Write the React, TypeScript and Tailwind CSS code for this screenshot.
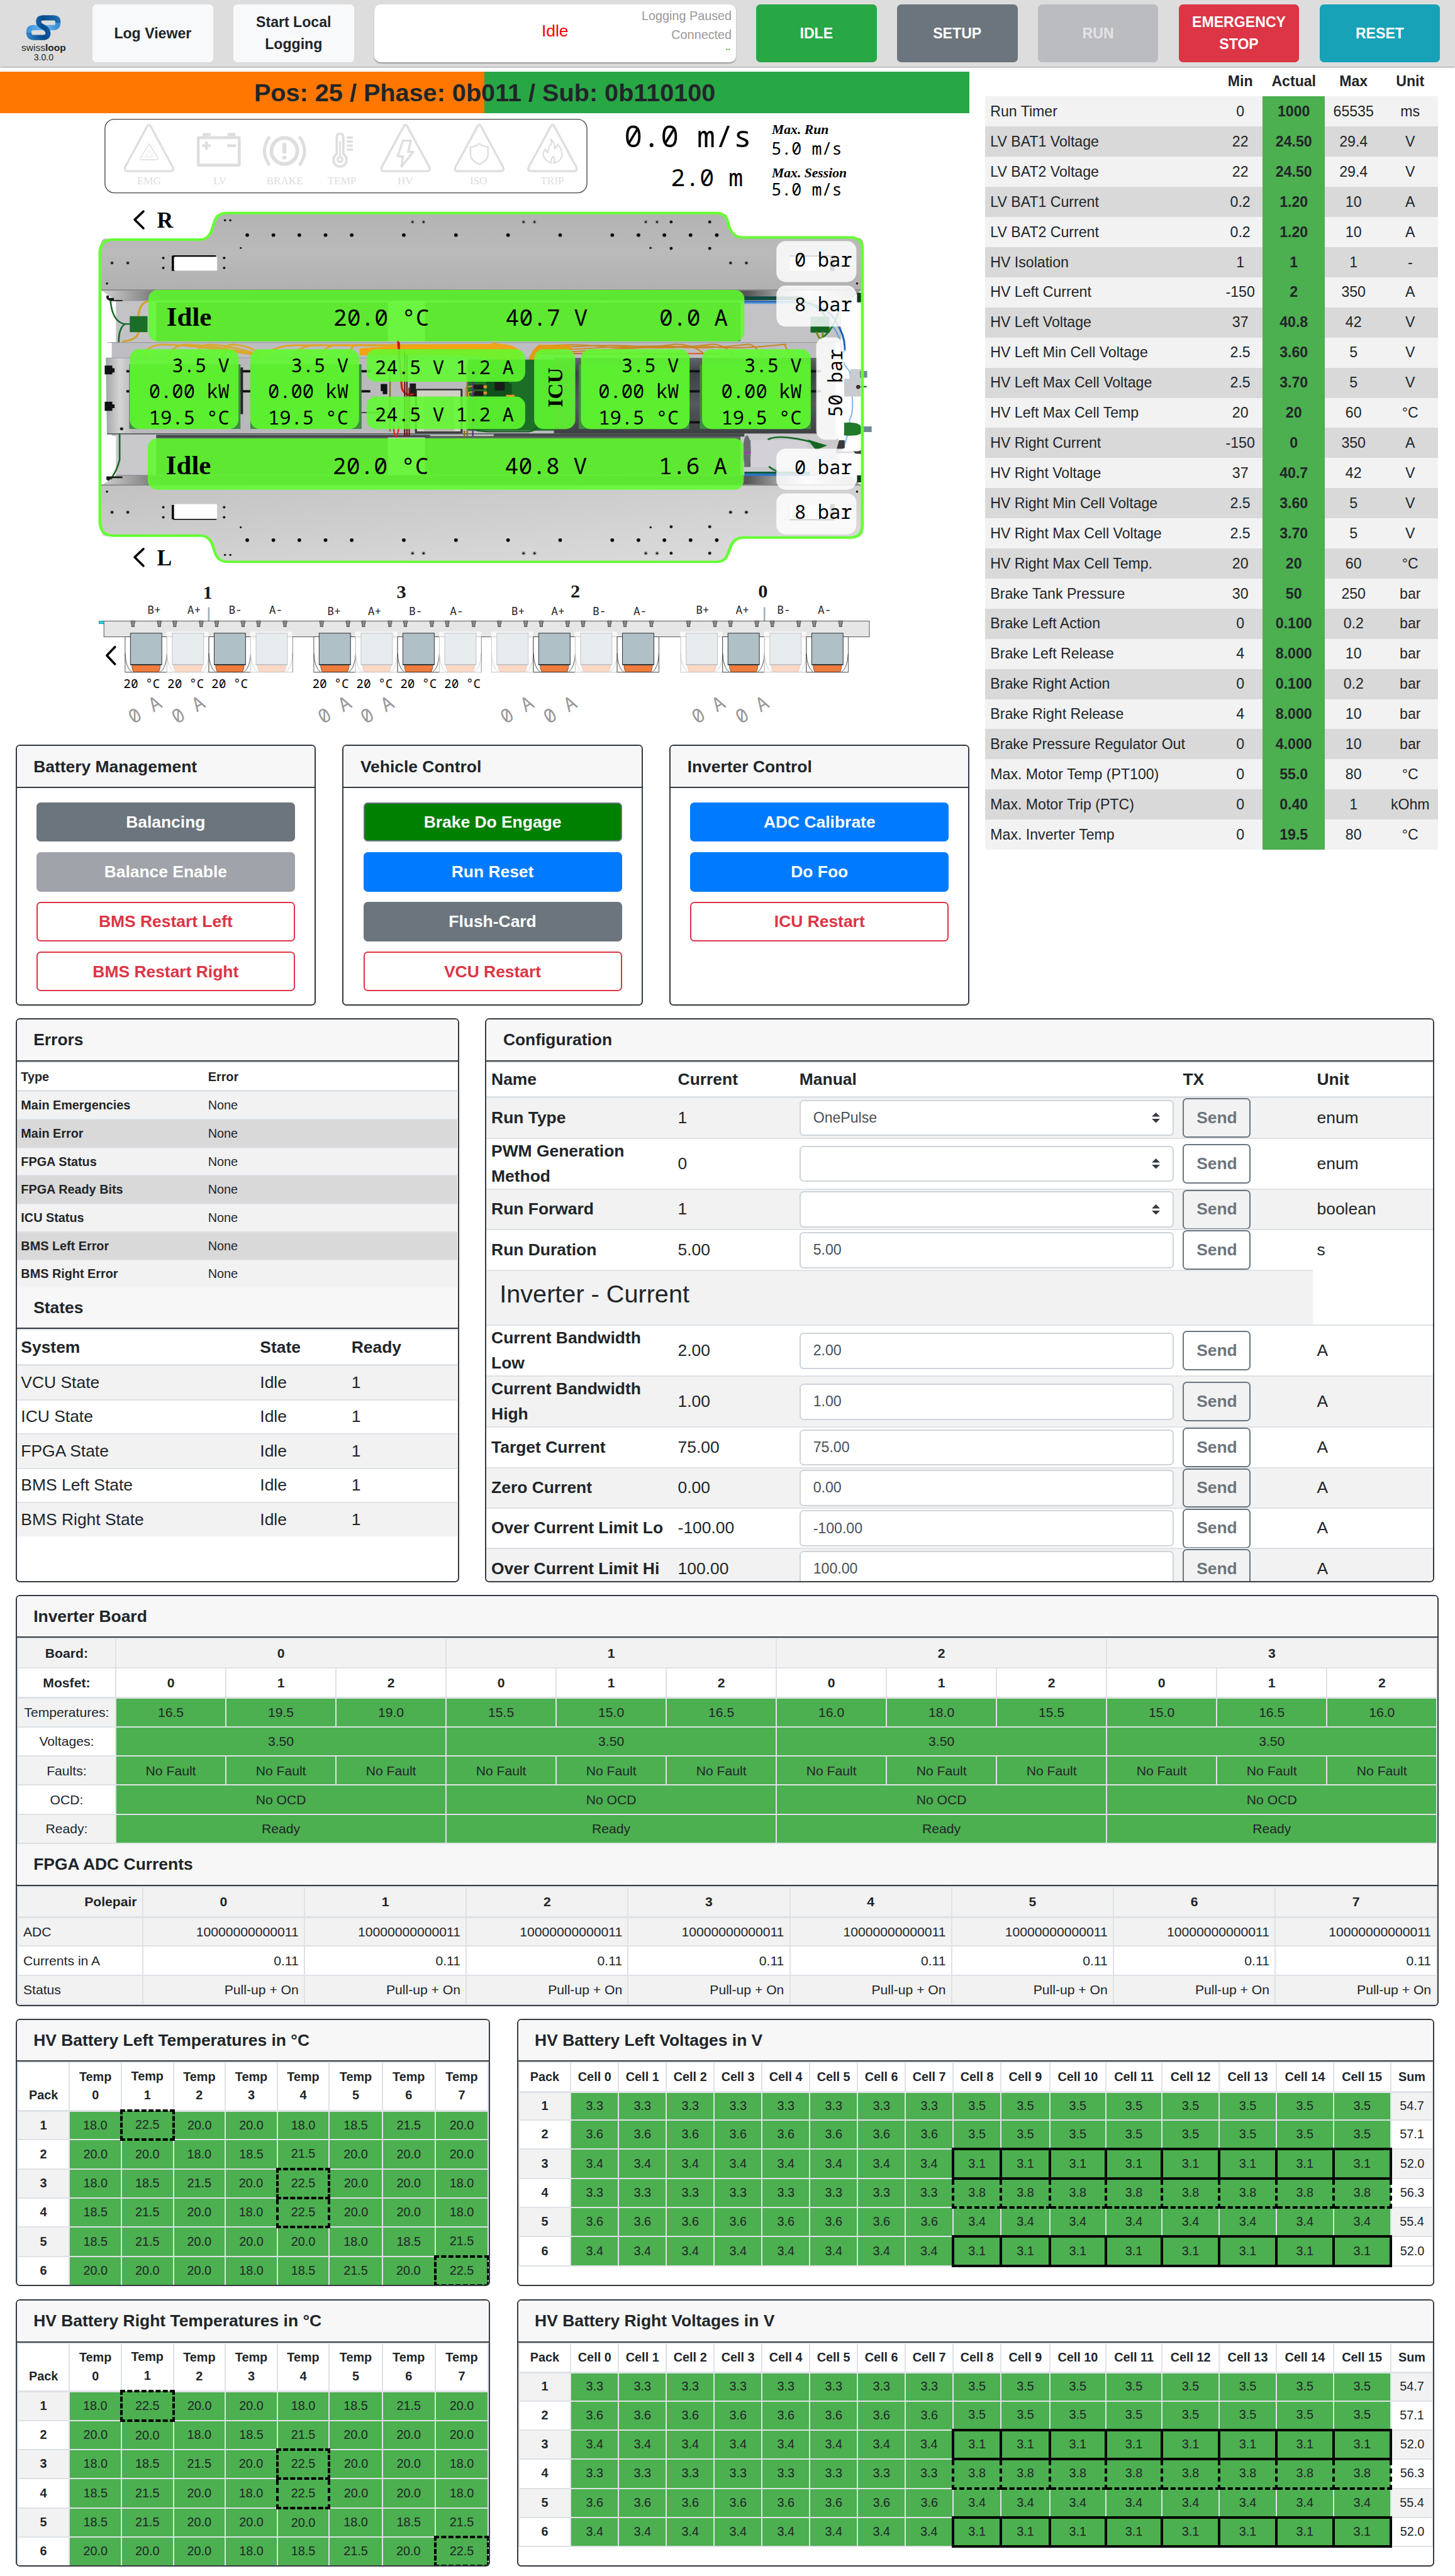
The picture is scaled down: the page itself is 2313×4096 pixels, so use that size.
import type { ReactNode } from "react";

/* ---------- data ---------- */

const sensors: [string, string, string, string, string][] = [
  ["Run Timer", "0", "1000", "65535", "ms"],
  ["LV BAT1 Voltage", "22", "24.50", "29.4", "V"],
  ["LV BAT2 Voltage", "22", "24.50", "29.4", "V"],
  ["LV BAT1 Current", "0.2", "1.20", "10", "A"],
  ["LV BAT2 Current", "0.2", "1.20", "10", "A"],
  ["HV Isolation", "1", "1", "1", "-"],
  ["HV Left Current", "-150", "2", "350", "A"],
  ["HV Left Voltage", "37", "40.8", "42", "V"],
  ["HV Left Min Cell Voltage", "2.5", "3.60", "5", "V"],
  ["HV Left Max Cell Voltage", "2.5", "3.70", "5", "V"],
  ["HV Left Max Cell Temp", "20", "20", "60", "°C"],
  ["HV Right Current", "-150", "0", "350", "A"],
  ["HV Right Voltage", "37", "40.7", "42", "V"],
  ["HV Right Min Cell Voltage", "2.5", "3.60", "5", "V"],
  ["HV Right Max Cell Voltage", "2.5", "3.70", "5", "V"],
  ["HV Right Max Cell Temp.", "20", "20", "60", "°C"],
  ["Brake Tank Pressure", "30", "50", "250", "bar"],
  ["Brake Left Action", "0", "0.100", "0.2", "bar"],
  ["Brake Left Release", "4", "8.000", "10", "bar"],
  ["Brake Right Action", "0", "0.100", "0.2", "bar"],
  ["Brake Right Release", "4", "8.000", "10", "bar"],
  ["Brake Pressure Regulator Out", "0", "4.000", "10", "bar"],
  ["Max. Motor Temp (PT100)", "0", "55.0", "80", "°C"],
  ["Max. Motor Trip (PTC)", "0", "0.40", "1", "kOhm"],
  ["Max. Inverter Temp", "0", "19.5", "80", "°C"],
];

const errors = [
  "Main Emergencies",
  "Main Error",
  "FPGA Status",
  "FPGA Ready Bits",
  "ICU Status",
  "BMS Left Error",
  "BMS Right Error",
];

const states = ["VCU State", "ICU State", "FPGA State", "BMS Left State", "BMS Right State"];

type ConfigRow = { name: string; current: string; manual?: string; select?: boolean; unit: string; tall?: boolean };

const runConfig: ConfigRow[] = [
  { name: "Run Type", current: "1", manual: "OnePulse", select: true, unit: "enum" },
  { name: "PWM Generation Method", current: "0", select: true, unit: "enum", tall: true },
  { name: "Run Forward", current: "1", select: true, unit: "boolean" },
  { name: "Run Duration", current: "5.00", manual: "5.00", unit: "s" },
];

const inverterConfig: ConfigRow[] = [
  { name: "Current Bandwidth Low", current: "2.00", manual: "2.00", unit: "A", tall: true },
  { name: "Current Bandwidth High", current: "1.00", manual: "1.00", unit: "A", tall: true },
  { name: "Target Current", current: "75.00", manual: "75.00", unit: "A" },
  { name: "Zero Current", current: "0.00", manual: "0.00", unit: "A" },
  { name: "Over Current Limit Lo", current: "-100.00", manual: "-100.00", unit: "A" },
  { name: "Over Current Limit Hi", current: "100.00", manual: "100.00", unit: "A" },
];

const mosfetTemps = ["16.5", "19.5", "19.0", "15.5", "15.0", "16.5", "16.0", "18.0", "15.5", "15.0", "16.5", "16.0"];

const packTemps = [
  ["18.0", "22.5", "20.0", "20.0", "18.0", "18.5", "21.5", "20.0"],
  ["20.0", "20.0", "18.0", "18.5", "21.5", "20.0", "20.0", "20.0"],
  ["18.0", "18.5", "21.5", "20.0", "22.5", "20.0", "20.0", "18.0"],
  ["18.5", "21.5", "20.0", "18.0", "22.5", "20.0", "20.0", "18.0"],
  ["18.5", "21.5", "20.0", "20.0", "20.0", "18.0", "18.5", "21.5"],
  ["20.0", "20.0", "20.0", "18.0", "18.5", "21.5", "20.0", "22.5"],
];

const packVolts: { low: string; high: string; sum: string }[] = [
  { low: "3.3", high: "3.5", sum: "54.7" },
  { low: "3.6", high: "3.5", sum: "57.1" },
  { low: "3.4", high: "3.1", sum: "52.0" },
  { low: "3.3", high: "3.8", sum: "56.3" },
  { low: "3.6", high: "3.4", sum: "55.4" },
  { low: "3.4", high: "3.1", sum: "52.0" },
];

const range = (n: number) => Array.from({ length: n }, (_, i) => i);

/* ---------- shared pieces ---------- */

function Card({ title, className, children }: { title: string; className: string; children: ReactNode }) {
  return (
    <section className={`overflow-hidden rounded-[4px] border-[1.22px] border-[#343a40] bg-white ${className}`}>
      <CardTitle>{title}</CardTitle>
      {children}
    </section>
  );
}

function CardTitle({ children }: { children: ReactNode }) {
  return (
    <h2 className="flex h-[40.4px] items-center border-b-[1.22px] border-[#343a40] bg-[#f7f7f7] px-4 pt-[0.8px] text-base font-bold">
      {children}
    </h2>
  );
}

function Logo() {
  return (
    <div className="flex w-[84px] flex-col items-center pt-3.5 leading-none">
      <svg viewBox="24 13.5 35 25.5" className="h-[25.5px] w-[35px]" fill="none" strokeWidth="5">
        <defs>
          <linearGradient id="logoDark" x1="0" x2="1">
            <stop offset="0" stopColor="#2f7fc4" />
            <stop offset="0.5" stopColor="#034a8c" />
            <stop offset="1" stopColor="#1f6cb0" />
          </linearGradient>
          <linearGradient id="logoLight" x1="0" x2="1">
            <stop offset="0" stopColor="#3f97dc" />
            <stop offset="0.5" stopColor="#6fbcf0" />
            <stop offset="1" stopColor="#3a8fd4" />
          </linearGradient>
        </defs>
        <path d="M55.5 20 V22 Q55.5 26.2 51 26.2 H32 Q27.6 26.4 27.6 30 V32" stroke="url(#logoLight)" />
        <path
          d="M55.5 21.5 V20.5 Q55.5 16.8 51 16.8 H41.5 Q36.9 16.8 36.9 20.5 Q37 23 40 24.8 Q46 27.5 46 31.5 Q46 35.6 41.8 35.6 H32 Q27.6 35.6 27.6 31"
          stroke="url(#logoDark)"
        />
      </svg>
      <div className="mt-[1.5px] text-[9.4px] leading-[10px]">
        swiss<b>loop</b>
      </div>
      <div className="text-[8.5px] leading-[9px]">3.0.0</div>
    </div>
  );
}

function TopButton({ children, className }: { children: ReactNode; className: string }) {
  return (
    <button
      className={`flex h-14 w-[116px] shrink-0 items-center justify-center rounded-[4px] px-2 text-center text-sm leading-[21px] font-bold ${className}`}
    >
      {children}
    </button>
  );
}

function Header() {
  return (
    <header className="relative flex h-16 bg-[#ddd] shadow-[0_1px_1px_rgba(0,0,0,0.3)]">
      <Logo />
      <div className="ml-[5px] flex gap-[19.55px] pt-1">
        <TopButton className="bg-[#f8f9fa] text-[#212529]">Log Viewer</TopButton>
        <TopButton className="bg-[#f8f9fa] text-[#212529]">Start Local Logging</TopButton>
        <div className="relative h-14 w-[348px] shrink-0 rounded-[6px] bg-white shadow-[0_1px_1px_rgba(0,0,0,0.3)]">
          <div className="pt-[14.3px] text-center text-base leading-6 text-[red]">Idle</div>
          <div className="absolute top-[2.6px] right-1 text-right text-xs leading-[18px] text-[#999]">
            <div>Logging Paused</div>
            <div>Connected</div>
            <div className="text-[7px] leading-[8px] text-[green]">↔</div>
          </div>
        </div>
        <TopButton className="bg-[#28a745] text-white">IDLE</TopButton>
        <TopButton className="bg-[#6c757d] text-white">SETUP</TopButton>
        <TopButton className="bg-[#bbbcc0] text-[#e3e3e5]">RUN</TopButton>
        <TopButton className="bg-[#dc3545] text-white">EMERGENCY STOP</TopButton>
        <TopButton className="bg-[#17a2b8] text-white">RESET</TopButton>
      </div>
    </header>
  );
}

/* ---------- vehicle drawing ---------- */

const MONO = "font-['Noto_Sans_Mono','DejaVu_Sans_Mono',monospace]";
const SERIF = "font-['Liberation_Serif',serif]";

function WarnTriangle({ cx }: { cx: number }) {
  return (
    <path
      d={`M${cx - 1.6} 121.5 Q${cx} 118.9 ${cx + 1.6} 121.5 L${cx + 23} 161 Q${cx + 24.2} 164.6 ${cx + 21} 164.8 H${cx - 21} Q${cx - 24.2} 164.6 ${cx - 23} 161 Z`}
      strokeWidth="2"
    />
  );
}

function Indicators() {
  const labels: [number, string][] = [
    [143.3, "EMG"],
    [211.6, "LV"],
    [274, "BRAKE"],
    [329, "TEMP"],
    [390, "HV"],
    [460.5, "ISO"],
    [531.4, "TRIP"],
  ];
  return (
    <g>
      <rect x="101" y="114.8" width="463.8" height="70.8" rx="9" fill="#fff" stroke="#444" strokeWidth="0.8" />
      <g fill="none" stroke="#dedede" strokeLinejoin="round">
        {[143.3, 390.2, 461.2, 531.7].map((cx) => (
          <WarnTriangle key={cx} cx={cx} />
        ))}
        <path d="M143.5 138.3 L151.8 152 Q152 153.8 150.5 153.8 H136.5 Q134.8 153.8 135.3 152 Z" strokeWidth="0.9" />
        <path d="M143.5 144.5 L147 151 H140 Z" strokeWidth="0.5" />
        <path d="M190.8 132.5 H230.2 V159 H190.8 Z" strokeWidth="2.8" />
        <path d="M195 129.7 H202.5 M219 129.7 H226.6" strokeWidth="3.2" />
        <path d="M194.6 140.2 H202.8 M198.7 136.2 V144.3 M218.6 140.2 H227" strokeWidth="2.6" />
        <circle cx="273.7" cy="145.3" r="12.5" strokeWidth="3.6" />
        <path d="M273.7 137.8 V147.8 M273.7 150.2 V153.4" strokeWidth="3.8" />
        <path d="M259.5 131.5 Q249.5 145.3 259.5 159.2 M288 131.5 Q298 145.3 288 159.2" strokeWidth="3" />
        <path
          d="M324 132 Q324 128.7 327.2 128.7 Q330.4 128.7 330.4 132 V148.4 A6.4 6.4 0 1 1 324 148.4 Z"
          strokeWidth="2.2"
        />
        <circle cx="327.2" cy="153.6" r="2.4" strokeWidth="2" />
        <path d="M327.2 136 V151" strokeWidth="1.6" />
        <path d="M334.6 132.4 H338.6 M334.6 136.3 H338.6 M334.6 140.2 H338.6 M334.6 144.1 H338.6" strokeWidth="2.2" strokeLinecap="round" />
        <path d="M387.8 135.4 H395.4 L392.8 146.2 H397.8 L386.3 160.4 L387.8 150.6 H382.6 Z" strokeWidth="2" />
        <path d="M461.2 138.3 Q464.5 141 469.6 141.5 V149 Q469.5 154.5 461.2 158.2 Q452.9 154.5 452.8 149 V141.5 Q457.9 141 461.2 138.3 Z" strokeWidth="1.5" />
        <path
          d="M530 134 Q534.5 138 533.5 143 Q536 142 536.5 138.8 Q541 143.5 540.8 149 Q540.3 155.5 532.5 157 Q534.8 154 532.6 150.4 Q529.8 153 530.6 156.8 Q523 154.5 522.8 148.2 Q522.8 145.5 525 143.6 Q525.5 146.5 527.4 147 Q527 142 530.6 138.5 Q531 136.5 530 134 Z"
          strokeWidth="1.3"
        />
      </g>
      <g className={SERIF} fill="#dedede" fontSize="10.4" textAnchor="middle">
        {labels.map(([x, t]) => (
          <text key={t} x={x} y="177.7">
            {t}
          </text>
        ))}
      </g>
    </g>
  );
}

const OUTLINE =
  "M78 230 Q80 177 125 177 H435 Q465 177 477 130 L487 95 Q497 66 530 66 H2266 Q2297 66 2306 98 Q2318 168 2358 168 H2742 Q2785 168 2785 222 V1375 Q2783 1426 2742 1426 H2358 Q2328 1430 2318 1462 L2306 1498 Q2297 1528 2266 1528 H530 Q497 1526 487 1490 L477 1455 Q465 1418 435 1418 H125 Q80 1418 78 1360 Z";

function Wires({ d, color, width }: { d: string; color: string; width: number }) {
  return <path d={d} fill="none" stroke={color} strokeWidth={width} strokeLinecap="round" />;
}

/* Top view of the pod, drawn in a 2880 x 1595 space. */
function PodChassis() {
  const bigHoles = [601, 694, 786, 879, 972, 1157, 1342, 1527, 1712, 1897, 1990, 2082, 2175, 2268];
  const smallHoles: [number, number, number][] = [
    [522, 96, 4], [541, 96, 4], [1188, 103, 3.5], [1227, 103, 3.5], [1582, 103, 3.5], [1621, 103, 3.5],
    [2016, 103, 3.5], [2056, 103, 3.5], [2106, 103, 5.5], [2243, 103, 5.5], [2033, 212, 4], [2106, 214, 5.5],
    [2243, 214, 5.5], [2317, 275, 4.5], [2373, 275, 4.5], [578, 212, 3.5], [303, 254, 4.5], [303, 296, 4.5],
    [519, 254, 4.5], [519, 296, 4.5], [121, 275, 4.5], [177, 275, 4.5], [103, 361, 4], [2766, 361, 4],
  ];
  const ringed = new Set([1188, 1227, 1582, 1621, 2016, 2056, 2317, 2373, 121, 177]);
  const heads = [0, 1, 2, 3];
  return (
    <g transform="translate(75 190) scale(0.27105 0.2296)">
      <defs>
        <linearGradient id="plateTop" x1="0" y1="0" x2="0" y2="1">
          <stop offset="0" stopColor="#b3b3b3" />
          <stop offset="0.5" stopColor="#bababa" />
          <stop offset="1" stopColor="#b1b1b1" />
        </linearGradient>
        <linearGradient id="plateBottom" x1="0" y1="0" x2="1" y2="1">
          <stop offset="0" stopColor="#c2c2c2" />
          <stop offset="1" stopColor="#dedede" />
        </linearGradient>
        <linearGradient id="lip" x1="0" x2="1">
          <stop offset="0" stopColor="#d2d2d2" />
          <stop offset="0.08" stopColor="#6d6d6d" />
          <stop offset="0.85" stopColor="#555" />
          <stop offset="0.93" stopColor="#e6e6e6" />
          <stop offset="1" stopColor="#999" />
        </linearGradient>
        <linearGradient id="box" x1="0" x2="1">
          <stop offset="0" stopColor="#a6a6a6" />
          <stop offset="0.03" stopColor="#d4d4d4" />
          <stop offset="0.06" stopColor="#b8b8ba" />
          <stop offset="1" stopColor="#bcbbbe" />
        </linearGradient>
        <linearGradient id="darkBox" x1="0" y1="0" x2="0" y2="1">
          <stop offset="0" stopColor="#60666a" />
          <stop offset="0.2" stopColor="#3e4143" />
          <stop offset="0.6" stopColor="#56595b" />
          <stop offset="1" stopColor="#3d4144" />
        </linearGradient>
      </defs>

      {/* plates */}
      <path d="M83 390 V190 Q84 174 100 173 H435 Q465 177 477 130 L487 95 Q497 70 530 68 H2290 Q2308 70 2308 98 Q2318 168 2358 170 H2772 Q2789 174 2789 195 V390 Z" fill="url(#plateTop)" />
      <path d="M83 1205 V1400 Q86 1420 100 1421 H435 Q465 1418 477 1455 L487 1490 Q497 1526 530 1526 H2285 Q2308 1524 2310 1495 Q2318 1428 2358 1424 H2772 Q2789 1420 2789 1400 V1205 Z" fill="url(#plateBottom)" />

      {/* inner tray */}
      <path d="M135 433 H2710 V607 H135 Z" fill="#c3c2c5" />
      <path d="M120 607 H2690 V1000 H120 Z" fill="#bebdc1" />
      <path d="M135 993 H2700 V1165 H135 Z" fill="#c9c8cb" />
      <path d="M83 390 H2780 L2740 433 H135 Z" fill="url(#lip)" />
      <path d="M135 1165 H2740 L2780 1208 H83 Z" fill="url(#lip)" />
      <path d="M83 388 H2780 M83 1206 H2780" stroke="#8b8b8b" strokeWidth="5" />
      <path d="M278 440 H1100 V603 H278 Z M1232 440 H2352 V603 H1232 Z M278 1000 H1100 V1165 H278 Z M1232 1000 H2352 V1165 H1232 Z" fill="#3c4a3a" opacity="0.75" />
      <path d="M105 609 H2700 M135 433 H2700 M135 1165 H2700" stroke="#8f979d" strokeWidth="3" fill="none" />

      {/* battery box */}
      <path d="M100 673 H1690 V993 H104 Z" fill="url(#box)" stroke="#8a9aa3" strokeWidth="2" />
      <path d="M1690 673 H2625 V990 H1690 Z" fill="url(#darkBox)" />
      <path d="M104 991 H1600" stroke="#55595c" strokeWidth="4" />
      <path d="M278 996 H1250 V1006 H278 Z M1476 990 H2366 V1003 H1476 Z" fill="#44484c" />

      {/* module connectors */}
      {[[172, 729], [172, 813], [577, 729], [577, 813], [1000, 729], [1000, 813], [2170, 729], [2170, 813], [2170, 943], [2600, 729], [2600, 813]].map(
        ([x, y]) => (
          <path key={`${x}-${y}`} d={`M${x} ${y - 5} h38 v10 h-38 Z`} fill="#111" />
        ),
      )}
      <path d="M577 713 h9 v196 h-9 Z M1004 900 H1110 V904 H1004 Z" fill="#222" />
      <path d="M95 705 H122 V716 H130 V734 H122 V742 H95 Z M95 857 H122 V868 H130 V884 H122 V895 H95 Z M1075 782 H1098 V825 H1082 V812 H1075 Z" fill="#101315" />
      <circle cx="155" cy="970" r="6" fill="#111" />
      <path d="M182 700 H577 V971 H182 Z M612 700 H1007 V971 H612 Z M1778 700 H2170 V971 H1778 Z M2208 700 H2602 V971 H2208 Z" fill="#3f8a45" />

      {/* high voltage harness */}
      {heads.map((i) => (
        <g key={i}>
          <Wires d={`M${235 + i * 92} 670 Q${240 + i * 92} 616 ${310 + i * 80} 617 Q${440 + i * 60} 622 650 665`} color="#d9a92c" width={7} />
          <Wires d={`M${670 + i * 96} 665 Q${690 + i * 96} 617 ${800 + i * 60} 620 H1500`} color="#e3a420" width={7} />
          <Wires d={`M1640 ${626 + i * 10} Q${1750 + i * 120} ${610 + i * 3} ${1860 + i * 130} 625 Q${1960 + i * 120} 640 ${2120 + i * 130} 616 Q${2190 + i * 105} 614 ${2230 + i * 100} 665`} color="#c98722" width={5} />
        </g>
      ))}
      <path d="M1000 633 Q1200 612 1500 615 Q1560 617 1580 660 L1530 700 Q1500 660 1200 662 H1000 Z" fill="#f2a413" />
      <Wires d="M1476 620 Q1580 640 1586 860" color="#eda31a" width={22} />
      <Wires d="M1600 905 Q1585 680 1640 630 H1740" color="#e39a17" width={24} />
      <Wires d="M1600 790 Q1610 700 1650 640" color="#f2b02c" width={6} />
      <path d="M1640 655 H2280" stroke="#df5a22" strokeWidth="5" />

      {/* electronics bay */}
      <path d="M1385 680 H1690 V978 H1385 Z" fill="#1c6e27" />
      <path d="M1450 760 H1530 V835 H1450 Z M1500 780 H1540 V830 H1500 Z" fill="#0e4f1a" />
      <path d="M1200 806 H1362 V985 H1200 Z" fill="#d2d0c6" stroke="#333" strokeWidth="7" />
      <path d="M1228 835 H1335 V980 H1228 Z" fill="#b9b7ab" />
      <path d="M1178 780 H1200 V835 H1178 Z M1405 785 H1440 V805 H1405 Z M1405 812 H1440 V832 H1405 Z M1480 775 H1515 V810 H1480 Z" fill="#1a1a1a" />
      <path d="M1440 788 h12 v12 h-12 Z M1440 814 h12 v12 h-12 Z M1520 828 h30 v8 h-30 Z" fill="#f28c28" />
      <Wires d="M1376 835 V800 Q1380 792 1400 792 M1390 835 Q1376 815 1405 815" color="#c9a02a" width={5} />
      <Wires d="M1136 600 L1150 800 Q1160 835 1190 825 M1140 610 V640" color="#d4190e" width={7} />
      <Wires d="M1160 650 V1000 M1168 660 V998 M1176 800 V998" color="#6b1515" width={5} />
      <Wires d="M1120 960 Q1128 1050 1140 960" color="#ef1414" width={5} />
      <Wires d="M1108 690 V980 M1382 700 V1000 M1372 980 V1000" color="#8a6a20" width={5} />
      <Wires d="M1402 740 V1000" color="#5c2a7a" width={5} />
      <Wires d="M1400 970 Q1420 985 1500 982 H1600 Q1630 980 1640 940" color="#175f22" width={6} />

      {/* left wiring */}
      <Wires d="M115 425 Q120 520 165 531 H185 M165 533 Q145 550 145 605" color="#176a26" width={6} />
      <Wires d="M148 993 V1100 Q140 1140 118 1180" color="#176a26" width={6} />
      <Wires d="M215 495 Q218 445 248 436 M215 565 Q210 598 160 604" color="#d2a42c" width={8} />
      <path d="M184 498 H247 V565 H184 Z" fill="#1a6e29" />
      <path d="M101 412 H110 V422 H128 V430 H158 V435 H120 Q101 432 101 420 Z M101 1183 V1170 H158 V1177 H120 L108 1188 Z" fill="#161616" />

      {/* right wiring and valves */}
      <path d="M2366 415 H2560 V430 H2366 Z" fill="#0e4a44" />
      <Wires d="M2366 438 H2560 Q2660 450 2690 520 Q2725 580 2722 640" color="#1c62b8" width={7} />
      <Wires d="M2366 445 H2560 Q2650 460 2680 540 Q2710 590 2712 640" color="#4c9be6" width={4} />
      <Wires d="M2540 430 Q2640 440 2660 520 M2700 480 Q2680 560 2640 590" color="#1d7a2c" width={7} />
      <path d="M2601 500 H2668 V567 H2601 Z" fill="#146622" />
      <Wires d="M2622 567 L2632 590 M2645 567 Q2645 580 2640 595" color="#7c8f1e" width={7} />
      <Wires d="M2722 640 Q2700 680 2740 730 Q2760 900 2740 930 Q2740 980 2715 1060 L2640 1120" color="#8db9ec" width={5} />
      <path d="M2742 720 H2790 V760 H2742 Z M2720 760 H2780 V835 H2720 Z" fill="#c8ccd0" />
      <path d="M2776 728 H2802 V756 H2776 Z M2780 960 H2818 V984 H2780 Z" fill="#6f8796" />
      <ellipse cx="2770" cy="795" rx="5" ry="6" fill="#a5562a" stroke="#111" strokeWidth="4" />
      <path d="M2778 790 H2800 V797 H2778 Z M2720 945 Q2770 940 2780 960 V990 Q2765 1003 2720 998 Z" fill="#1f7a2c" />
      <path d="M2366 1018 H2388 V1130 H2366 Z" fill="#5c5d63" />
      <path d="M2388 1018 H2590 V1130 H2388 Z" fill="#d3d1d7" />
      <ellipse cx="2375" cy="1064" rx="14" ry="66" fill="#6a6b72" />
      <Wires d="M2364 1070 H2386" color="#c21ccf" width={5} />
      <Wires d="M2452 1014 Q2480 998 2540 1010 Q2600 1020 2640 1040 M2455 1130 Q2470 1145 2485 1148" color="#176a26" width={7} />
      <path d="M2590 1015 L2660 1040 L2620 1060 Z" fill="#146622" />
      <path d="M2702 1018 H2722 V1050 L2700 1064 H2770 L2786 1058 V1076 L2740 1072 H2690 Z" fill="#3a3a3e" />
      <path d="M2366 1150 H2600 V1158 H2366 Z" fill="#0c5a3a" />
      <path d="M2366 1158 H2600 V1168 H2366 Z" fill="#2a73c4" />
      <path d="M2766 400 H2782 V440 H2766 Z M2766 1165 H2782 V1195 H2766 Z" fill="#0f3a18" />

      {/* cut-outs and screw holes */}
      <path d="M333 308 V248 Q333 243 340 243 H490 V308 Z M333 1348 V1290 H492 V1352 H340 Z" fill="#000" />
      <rect x="341" y="249" width="153" height="59" rx="4" fill="#fff" />
      <rect x="341" y="1286" width="153" height="62" rx="4" fill="#fff" />
      <path d="M2527 243 H2686 V308 H2527 Z M2527 1286 H2686 V1354 H2527 Z" fill="#111" />
      <path d="M2527 249 H2670 V308 H2527 Z M2527 1286 H2670 V1348 H2527 Z" fill="#fff" />
      {bigHoles.map((x) => (
        <g key={x} fill="#0c0c0c">
          <ellipse cx={x} cy="158" rx="6.5" ry="7.5" />
          <ellipse cx={x} cy="1437" rx="6.5" ry="7.5" />
        </g>
      ))}
      {smallHoles.map(([x, y, r]) => (
        <g key={`${x}-${y}`}>
          {ringed.has(x) && (
            <g fill="#9a9a9a">
              <ellipse cx={x} cy={y} rx="7" ry="8" />
              <ellipse cx={x} cy={1595 - y} rx="7" ry="8" />
            </g>
          )}
          <g fill="#1a120e">
            <ellipse cx={x} cy={y} rx={r} ry={r * 1.15} />
            <ellipse cx={x} cy={1595 - y} rx={r} ry={r * 1.15} />
          </g>
        </g>
      ))}
      <path d={OUTLINE} fill="none" stroke="#66ff33" strokeWidth="10.5" />
    </g>
  );
}

function StringBar({ x, y, voltage, current }: { x: number; y: number; voltage: string; current: string }) {
  return (
    <g>
      <rect x={x} y={y} width="573.5" height="49.5" rx="9" fill="#5efc2c" opacity="0.87" />
      <text x={x + 17.5} y={y + 34.4} className={SERIF} fontSize="26" fontWeight="bold">
        Idle
      </text>
      <g className={MONO} fontSize="22" textAnchor="end">
        <text x={x + 270.3} y={y + 34.4}>20.0 °C</text>
        <text x={x + 422.8} y={y + 34.4}>{voltage}</text>
        <text x={x + 557.6} y={y + 34.4}>{current}</text>
      </g>
    </g>
  );
}

function Pod() {
  const modules: [number, number][] = [
    [124.9, 220.8],
    [240.9, 335.3],
    [559, 653.3],
    [675.6, 771.5],
  ];
  const brakes: [number, string][] = [
    [232, "0 bar"],
    [274.9, "8 bar"],
    [431.9, "0 bar"],
    [474.9, "8 bar"],
  ];
  return (
    <g fill="#000">
      <PodChassis />
      <StringBar x={142.8} y={279.1} voltage="40.7 V" current="0.0 A" />
      <StringBar x={142.2} y={421.9} voltage="40.8 V" current="1.6 A" />
      {modules.map(([x, right]) => (
        <g key={x}>
          <rect x={x} y="336.2" width="104.6" height="76.8" rx="9" fill="#5efa2e" opacity="0.9" />
          <g className={MONO} fontSize="18.45" textAnchor="end">
            <text x={right} y="358.3">3.5 V</text>
            <text x={right} y="383.5">0.00 kW</text>
            <text x={right} y="408.4">19.5 °C</text>
          </g>
        </g>
      ))}
      {[336.2, 381.7].map((y) => (
        <g key={y}>
          <rect x="352.8" y={y} width="152.6" height="31.3" rx="9" fill="#60fb30" opacity="0.88" />
          <text x="360.6" y={y + 23.8} className={MONO} fontSize="18.6">
            24.5 V 1.2 A
          </text>
        </g>
      ))}
      <rect x="514" y="336.2" width="39.6" height="76.8" rx="9" fill="#60fb30" opacity="0.88" />
      <text transform="translate(541 392.2) rotate(-90)" className={SERIF} fontSize="20.9" fontWeight="bold">
        ICU
      </text>
      {brakes.map(([y, t]) => (
        <g key={y}>
          <rect x="747.1" y={y} width="77" height="39.5" rx="9" fill="#fff" opacity="0.84" />
          <text x="820" y={y + 24.8} className={MONO} fontSize="18.5" textAnchor="end">
            {t}
          </text>
        </g>
      ))}
      <rect x="785.4" y="324.8" width="26.6" height="98.5" rx="9" fill="#fff" opacity="0.84" />
      <text transform="translate(810.4 401.4) rotate(-90)" className={MONO} fontSize="18.2">
        50 bar
      </text>
      <g fill="none" stroke="#000" strokeWidth="2.2" strokeLinecap="round" strokeLinejoin="round">
        <path d="M138 203.5 L129.6 211.5 L138 219.8" />
        <path d="M138 528.4 L129.6 536.4 L138 544.7" />
      </g>
      <g className={SERIF} fontSize="21.5" fontWeight="bold">
        <text x="151" y="219.3">R</text>
        <text x="151" y="544.3">L</text>
      </g>
    </g>
  );
}

type CoilGroup = { x: number; id: string; idX: number; idY: number; labelX: number[]; labelY: number; faded: number; amps: number[] };

const coilGroups: CoilGroup[] = [
  { x: 125.5, id: "1", idX: 199.8, idY: 576.3, labelX: [141.8, 180.3, 220, 259], labelY: 590.8, faded: 1, amps: [129.6, 171.4] },
  { x: 307.1, id: "3", idX: 386.2, idY: 575.5, labelX: [315, 354, 393.5, 433], labelY: 591.8, faded: 1, amps: [312.2, 353.2] },
  { x: 478.1, id: "2", idX: 553.6, idY: 575, labelX: [492, 530.4, 570.2, 609.5], labelY: 592, faded: 0, amps: [487.7, 529.2] },
  { x: 660.2, id: "0", idX: 734.2, idY: 575, labelX: [669.6, 708, 747.8, 787], labelY: 591, faded: 0, amps: [671.9, 713.9] },
];

function Coil({ x, faded }: { x: number; faded: boolean }) {
  return (
    <g>
      {[2.2, 27.6].map((dx) => (
        <path key={dx} d={`M${x + dx - 1.6} 597.5 h3.6 v2.5 h-0.5 v3.2 h-2.6 v-3.2 h-0.5 Z`} fill="#8c8c8c" stroke="#222" strokeWidth="0.4" />
      ))}
      <rect x={x - 5.1} y="613" width="40.2" height="34" fill="#fff" stroke="#333" strokeWidth="0.5" />
      <path
        d={`M${x - 5.1} 629 Q${x - 4.5} 643 ${x + 1.5} 647 M${x + 35.1} 629 Q${x + 34.5} 643 ${x + 28.5} 647`}
        fill="none"
        stroke="#333"
        strokeWidth="0.5"
      />
      <path d={`M${x - 5.1} 647 H${x + 35.1}`} stroke="#888" strokeWidth="0.8" />
      <path d={`M${x + 1.5} 640 H${x + 28.7} V642.5 L${x + 27.5} 646.7 H${x + 2.7} L${x + 1.5} 642.5 Z`} fill="#f07c3d" stroke="#5a2a10" strokeWidth="0.4" />
      <rect x={x} y="609.5" width="30.2" height="30.4" fill="#afc0c7" stroke="#333" strokeWidth="0.6" />
      <path d={`M${x} 639.7 H${x + 30.2}`} stroke="#26323a" strokeWidth="1" />
      {faded && <rect x={x - 5.6} y="608" width="40.6" height="41" fill="#fff" opacity="0.7" />}
    </g>
  );
}

function Stator() {
  return (
    <g>
      <path d="M200.9 584.5 V598 M735.6 584.5 V598" stroke="#9fb1b8" strokeWidth="1.6" />
      <rect x="95.4" y="597.8" width="5" height="2.6" fill="#19d8e8" stroke="#1a6a70" strokeWidth="0.4" />
      <rect x="100" y="597.8" width="736.6" height="15.2" fill="#e6e6e6" stroke="#555" strokeWidth="0.6" />
      {coilGroups.map((g) => (
        <g key={g.id}>
          {range(4).map((i) => (
            <Coil key={i} x={g.x + i * 40.3} faded={i % 2 === g.faded} />
          ))}
          <text x={g.idX} y={g.idY} className={SERIF} fontSize="18.4" fontWeight="bold" textAnchor="middle" fill="#1a1a1a">
            {g.id}
          </text>
          <g className={MONO} fontSize="10.8" fill="#222">
            {["B+", "A+", "B-", "A-"].map((t, i) => (
              <text key={t} x={g.labelX[i]} y={g.labelY}>
                {t}
              </text>
            ))}
          </g>
          <g className={MONO} fontSize="18.7" fill="#999">
            {g.amps.map((x) => (
              <text key={x} transform={`translate(${x} 688.8) rotate(-31)`} x="-5.6" y="6.7">
                0 A
              </text>
            ))}
          </g>
        </g>
      ))}
      <g className={MONO} fontSize="11.75" fill="#000">
        <text x="118.8" y="662">20 °C 20 °C 20 °C</text>
        <text x="300.5" y="662">20 °C 20 °C 20 °C 20 °C</text>
      </g>
      <path d="M110.6 622.8 L102.8 631 L110.6 639.2" fill="none" stroke="#000" strokeWidth="2.2" strokeLinecap="round" strokeLinejoin="round" />
    </g>
  );
}

function VehicleDiagram() {
  return (
    <svg viewBox="0 109 933 608" className="block h-[608px] w-[933px]">
      <Indicators />
      <g fill="#000" className={MONO}>
        <text x="723.3" y="141.6" fontSize="29.2" textAnchor="end">0.0 m/s</text>
        <text x="715" y="179.2" fontSize="23.2" textAnchor="end">2.0 m</text>
        <text x="742.3" y="148.8" fontSize="16.2">5.0 m/s</text>
        <text x="742.3" y="188.3" fontSize="16.2">5.0 m/s</text>
      </g>
      <g className={SERIF} fontSize="13.1" fontWeight="bold" fontStyle="italic" fill="#000">
        <text x="742.8" y="129">Max. Run</text>
        <text x="742.8" y="171">Max. Session</text>
      </g>
      <Pod />
      <Stator />
    </svg>
  );
}

/* ---------- tables and control cards ---------- */

function SensorTable() {
  return (
    <table className="mt-1 ml-[15px] w-[436px] table-fixed self-start text-center text-sm leading-[21px]">
      <colgroup>
        <col className="w-[224px]" />
        <col className="w-[43px]" />
        <col className="w-[60px]" />
        <col className="w-[55px]" />
        <col className="w-[54px]" />
      </colgroup>
      <thead>
        <tr className="h-[24.9px] [&>th]:p-0 [&>th]:pb-[3.9px] [&>th]:font-bold">
          <th />
          <th>Min</th>
          <th>Actual</th>
          <th>Max</th>
          <th>Unit</th>
        </tr>
      </thead>
      <tbody>
        {sensors.map(([name, min, actual, max, unit]) => (
          <tr key={name} className="h-[29px] odd:bg-[#f2f2f2] even:bg-[#d9d9d9] [&>td]:py-0 [&>td]:whitespace-nowrap">
            <td className="pl-[5px] text-left">{name}</td>
            <td>{min}</td>
            <td className="bg-[#4caf50] font-bold">{actual}</td>
            <td>{max}</td>
            <td>{unit}</td>
          </tr>
        ))}
      </tbody>
    </table>
  );
}

function ControlButton({ children, className }: { children: ReactNode; className: string }) {
  return (
    <button className={`block h-[38px] w-full rounded-[4px] border-[1.22px] text-center text-base leading-none font-bold ${className}`}>
      {children}
    </button>
  );
}

const GRAY_BTN = "border-[#6c757d] bg-[#6c757d] text-white";
const BLUE_BTN = "border-[#007bff] bg-[#007bff] text-white";
const RED_BTN = "border-[#dc3545] bg-white text-[#dc3545]";

function ControlCards() {
  const body = "flex flex-col gap-[10px] px-[18.8px] pt-[13.6px]";
  const card = "h-[251px] w-[288.8px]";
  return (
    <div className="flex justify-between pl-[15px]">
      <Card title="Battery Management" className={card}>
        <div className={body}>
          <ControlButton className={GRAY_BTN}>Balancing</ControlButton>
          <ControlButton className="border-[#a0a4aa] bg-[#a0a4aa] text-white">Balance Enable</ControlButton>
          <ControlButton className={RED_BTN}>BMS Restart Left</ControlButton>
          <ControlButton className={RED_BTN}>BMS Restart Right</ControlButton>
        </div>
      </Card>
      <Card title="Vehicle Control" className={card}>
        <div className={body}>
          <ControlButton className="border-[#6c757d] bg-[green] text-white">Brake Do Engage</ControlButton>
          <ControlButton className={BLUE_BTN}>Run Reset</ControlButton>
          <ControlButton className={GRAY_BTN}>Flush-Card</ControlButton>
          <ControlButton className={RED_BTN}>VCU Restart</ControlButton>
        </div>
      </Card>
      <Card title="Inverter Control" className={card}>
        <div className={body}>
          <ControlButton className={BLUE_BTN}>ADC Calibrate</ControlButton>
          <ControlButton className={BLUE_BTN}>Do Foo</ControlButton>
          <ControlButton className={RED_BTN}>ICU Restart</ControlButton>
        </div>
      </Card>
    </div>
  );
}

function ErrorsCard() {
  return (
    <Card title="Errors" className="h-[543px] w-[427px]">
      <div className="w-[424px] text-xs">
        <div className="grid h-[29.4px] grid-cols-[180px_1fr] items-center border-t-[1.22px] border-b-2 border-[#dee2e6] pt-px pl-1 font-bold">
          <span>Type</span>
          <span>Error</span>
        </div>
        {errors.map((name, i) => (
          <div
            key={name}
            className={`grid grid-cols-[180px_1fr] items-center pl-1 ${i === 0 ? "h-[26px]" : "h-[27px] border-t-[1.22px] border-[#dee2e6]"} ${i % 2 ? "bg-[#d9d9d9]" : "bg-[#f2f2f2]"}`}
          >
            <b>{name}</b>
            <span>None</span>
          </div>
        ))}
      </div>
      <CardTitle>States</CardTitle>
      <div className="w-[424px] text-base">
        <div className="grid h-[35.4px] grid-cols-[230px_88px_1fr] items-center border-t-[1.22px] border-b-2 border-[#dee2e6] pt-px pl-1 font-bold">
          <span>System</span>
          <span>State</span>
          <span>Ready</span>
        </div>
        {states.map((name, i) => (
          <div
            key={name}
            className={`grid grid-cols-[230px_88px_1fr] items-center pl-1 ${i === 0 ? "h-8" : "h-[33px] border-t-[1.22px] border-[#dee2e6]"} ${i % 2 ? "bg-white" : "bg-[#f2f2f2]"}`}
          >
            <span>{name}</span>
            <span>Idle</span>
            <span>1</span>
          </div>
        ))}
      </div>
    </Card>
  );
}

function ConfigLine({ row, striped, first }: { row: ConfigRow; striped: boolean; first?: boolean }) {
  return (
    <div
      className={`grid shrink-0 grid-cols-[179.5px_117px_369px_129px_1fr] items-center pl-[4.6px] ${first ? "h-[38px]" : row.tall ? "h-[49px] border-t-[1.22px] border-[#dee2e6]" : "h-[39px] border-t-[1.22px] border-[#dee2e6]"} ${striped ? "bg-[#f2f2f2]" : "bg-white"}`}
    >
      <b className={row.tall ? "w-[150px] leading-6" : "whitespace-nowrap"}>{row.name}</b>
      <span>{row.current}</span>
      <div className="flex h-[35px] w-[360px] items-center justify-between rounded-[4px] border-[1.22px] border-[#ced4da] bg-white pr-3 pl-3 text-sm text-[#495057]">
        <span>{row.manual}</span>
        {row.select && (
          <svg viewBox="0 0 4 5" className="h-[10px] w-2">
            <path fill="#343a40" d="M2 0L0 2h4zm0 5L0 3h4z" />
          </svg>
        )}
      </div>
      <button className="h-[38px] w-[65.4px] rounded-[4px] border-[1.22px] border-[#6c757d] font-bold text-[#6c757d]">Send</button>
      <span>{row.unit}</span>
    </div>
  );
}

function ConfigCard() {
  return (
    <Card title="Configuration" className="h-[543px] w-[913px]">
      <div className="flex flex-col text-base">
        <div className="grid h-[35.4px] shrink-0 grid-cols-[179.5px_117px_369px_129px_1fr] items-center border-t-[1.22px] border-b-2 border-[#dee2e6] pt-px pl-[4.6px] font-bold">
          <span>Name</span>
          <span>Current</span>
          <span>Manual</span>
          <span>TX</span>
          <span>Unit</span>
        </div>
        {runConfig.map((row, i) => (
          <ConfigLine key={row.name} row={row} striped={i % 2 === 0} first={i === 0} />
        ))}
        <h3 className="h-[53px] w-[795.4px] shrink-0 border-t-[1.22px] border-[#dee2e6] bg-[#f2f2f2] pt-2 pl-[12.6px] text-2xl leading-[29px]">
          Inverter - Current
        </h3>
        {inverterConfig.map((row, i) => (
          <ConfigLine key={row.name} row={row} striped={i % 2 === 1} />
        ))}
      </div>
    </Card>
  );
}

const TABLE = "table-fixed border-collapse text-center [&_td]:border-[1.22px] [&_td]:border-[#dee2e6] [&_td]:p-0 [&_th]:border-[1.22px] [&_th]:border-[#dee2e6] [&_th]:p-0";
const OK = "bg-[#4caf50]";

function InverterCard() {
  return (
    <Card title="Inverter Board" className="ml-[15px] h-[396px] w-[1369.6px]">
      <table className={`${TABLE} w-full text-[12.8px] leading-[19px]`}>
        <colgroup>
          <col className="w-[94.6px]" />
          {range(12).map((i) => (
            <col key={i} />
          ))}
        </colgroup>
        <thead>
          <tr className="h-[28px] bg-[#f2f2f2]">
            <th>Board:</th>
            {range(4).map((i) => (
              <th key={i} colSpan={3}>
                {i}
              </th>
            ))}
          </tr>
          <tr className="h-[29px]">
            <th className="!border-b-2">Mosfet:</th>
            {range(12).map((i) => (
              <th key={i} className="!border-b-2">
                {i % 3}
              </th>
            ))}
          </tr>
        </thead>
        <tbody>
          <tr className="h-[28px]">
            <td className="bg-[#f2f2f2]">Temperatures:</td>
            {mosfetTemps.map((t, i) => (
              <td key={i} className={OK}>
                {t}
              </td>
            ))}
          </tr>
          <tr className="h-[28px]">
            <td>Voltages:</td>
            {range(4).map((i) => (
              <td key={i} colSpan={3} className={OK}>
                3.50
              </td>
            ))}
          </tr>
          <tr className="h-[28px]">
            <td className="bg-[#f2f2f2]">Faults:</td>
            {range(12).map((i) => (
              <td key={i} className={OK}>
                No Fault
              </td>
            ))}
          </tr>
          <tr className="h-[28px]">
            <td>OCD:</td>
            {range(4).map((i) => (
              <td key={i} colSpan={3} className={OK}>
                No OCD
              </td>
            ))}
          </tr>
          <tr className="h-[28px]">
            <td className="bg-[#f2f2f2]">Ready:</td>
            {range(4).map((i) => (
              <td key={i} colSpan={3} className={OK}>
                Ready
              </td>
            ))}
          </tr>
        </tbody>
      </table>
      <CardTitle>FPGA ADC Currents</CardTitle>
      <table className={`${TABLE} w-full text-[12.8px] leading-[19px] [&_td]:!px-[5px] [&_td]:text-right`}>
        <colgroup>
          <col className="w-[120.5px]" />
          {range(8).map((i) => (
            <col key={i} />
          ))}
        </colgroup>
        <thead>
          <tr className="h-[29.4px] bg-[#f2f2f2] [&>th]:!border-b-2">
            <th className="!pr-[5px] text-right">Polepair</th>
            {range(8).map((i) => (
              <th key={i}>{i}</th>
            ))}
          </tr>
        </thead>
        <tbody>
          {[
            ["ADC", "10000000000011"],
            ["Currents in A", "0.11"],
            ["Status", "Pull-up + On"],
          ].map(([name, value]) => (
            <tr key={name} className="h-[28px] odd:bg-[#f2f2f2]">
              <td className="!text-left">{name}</td>
              {range(8).map((i) => (
                <td key={i}>{value}</td>
              ))}
            </tr>
          ))}
        </tbody>
      </table>
    </Card>
  );
}

function TempsCard({ side }: { side: string }) {
  return (
    <Card title={`HV Battery ${side} Temperatures in °C`} className="h-[257.2px] w-[456.4px]">
      <table className={`${TABLE} w-[453.4px] text-xs leading-[18px]`}>
        <colgroup>
          {range(6).map((i) => (
            <col key={i} className="w-[50px]" />
          ))}
          {range(3).map((i) => (
            <col key={i} className="w-[51px]" />
          ))}
        </colgroup>
        <thead>
          <tr className="h-[46.4px] [&>th]:!border-b-2 [&>th]:align-bottom">
            <th className="!pb-[4.6px]">Pack</th>
            {range(8).map((i) => (
              <th key={i} className="!pb-[4.6px]">
                Temp
                <br />
                {i}
              </th>
            ))}
          </tr>
        </thead>
        <tbody>
          {packTemps.map((row, r) => (
            <tr key={r} className="h-[28.05px]">
              <th className={r % 2 ? "bg-white" : "bg-[#f2f2f2]"}>{r + 1}</th>
              {row.map((t, i) => (
                <td key={i} className={t === "22.5" ? "!border-[2.43px] !border-dashed !border-black bg-[#4caf50]" : OK}>
                  {t}
                </td>
              ))}
            </tr>
          ))}
        </tbody>
      </table>
    </Card>
  );
}

function VoltsCard({ side }: { side: string }) {
  return (
    <Card title={`HV Battery ${side} Voltages in V`} className="h-[257.2px] w-[882.6px]">
      <table className={`${TABLE} w-[880px] text-xs leading-[18px]`}>
        <colgroup>
          <col className="w-[50px]" />
          {range(9).map((i) => (
            <col key={i} className="w-[46px]" />
          ))}
          <col className="w-[47px]" />
          <col className="w-[54px]" />
          <col className="w-[54px]" />
          <col className="w-[55px]" />
          <col className="w-[55px]" />
          <col className="w-[55px]" />
          <col className="w-[55px]" />
          <col className="w-[41px]" />
        </colgroup>
        <thead>
          <tr className="h-[28.3px] [&>th]:!border-b-2">
            <th>Pack</th>
            {range(16).map((i) => (
              <th key={i}>Cell {i}</th>
            ))}
            <th>Sum</th>
          </tr>
        </thead>
        <tbody>
          {packVolts.map((row, r) => (
            <tr key={r} className={r === 0 ? "h-[27.2px]" : "h-[28.05px]"}>
              <th className={r % 2 ? "bg-white" : "bg-[#f2f2f2]"}>{r + 1}</th>
              {range(16).map((i) => {
                const value = i < 8 ? row.low : row.high;
                const mark =
                  value === "3.1"
                    ? "!border-[2.43px] !border-black bg-[#4caf50]"
                    : value === "3.8"
                      ? "!border-[2.43px] !border-dashed !border-black bg-[#4caf50]"
                      : OK;
                return (
                  <td key={i} className={mark}>
                    {value}
                  </td>
                );
              })}
              <td className={r % 2 ? "bg-white" : "bg-[#f2f2f2]"}>{row.sum}</td>
            </tr>
          ))}
        </tbody>
      </table>
    </Card>
  );
}

export default function App() {
  return (
    <div className="h-[2479.4px] w-[1400px] overflow-hidden bg-white font-['Liberation_Sans',Arial,sans-serif] text-[#212529] [zoom:1.652]">
      <Header />
      <div className="flex">
        <div className="w-[933px] pt-[5px]">
          <div className="flex h-10 items-center justify-center bg-[linear-gradient(to_right,#ff7700_50%,#28a745_50%)] text-2xl font-bold">
            Pos: 25 / Phase: 0b011 / Sub: 0b110100
          </div>
          <VehicleDiagram />
          <ControlCards />
        </div>
        <SensorTable />
      </div>
      <div className="mt-3 flex gap-[25px] pl-[15px]">
        <ErrorsCard />
        <ConfigCard />
      </div>
      <div className="mt-3">
        <InverterCard />
      </div>
      <div className="mt-3 flex gap-[26px] pl-[15px]">
        <TempsCard side="Left" />
        <VoltsCard side="Left" />
      </div>
      <div className="mt-[13px] flex gap-[26px] pl-[15px]">
        <TempsCard side="Right" />
        <VoltsCard side="Right" />
      </div>
    </div>
  );
}
